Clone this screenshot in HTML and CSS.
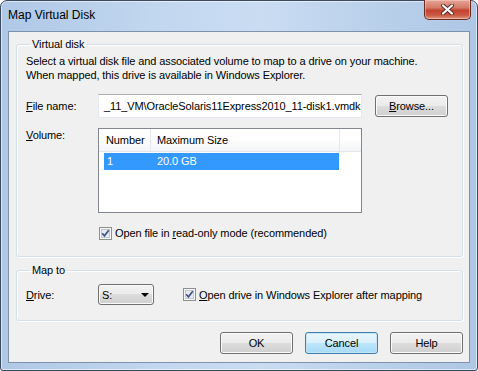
FILE: index.html
```html
<!DOCTYPE html>
<html lang="en">
<head>
    <meta charset="UTF-8">
    <title>Map Virtual Disk</title>
    <link rel="stylesheet" href="styles.css">
</head>
<body>
    <div class="window">
        <div class="titlebar">
            <span class="title">Map Virtual Disk</span>
            <button class="close-btn" aria-label="Close">
                <svg width="15" height="11" viewBox="0 0 15 11">
                    <path d="M3 1.5 L12 9.5 M12 1.5 L3 9.5" stroke="#5a2a22" stroke-width="4" stroke-linecap="round"/>
                    <path d="M3 1.5 L12 9.5 M12 1.5 L3 9.5" stroke="#fff" stroke-width="2.2" stroke-linecap="round"/>
                </svg>
            </button>
        </div>

        <div class="client">
            <!-- Virtual disk group -->
            <fieldset class="group group-disk">
                <legend>Virtual disk</legend>
                <p class="intro">Select a virtual disk file and associated volume to map to a drive on your machine.<br>When mapped, this drive is available in Windows Explorer.</p>

                <div class="row row-file">
                    <label class="field-label" for="file-name"><u>F</u>ile name:</label>
                    <div class="textbox" id="file-name">_11_VM\OracleSolaris11Express2010_11-disk1.vmdk</div>
                    <button class="btn browse-btn"><u>B</u>rowse...</button>
                </div>

                <div class="row row-volume">
                    <span class="field-label"><u>V</u>olume:</span>
                    <div class="listview">
                        <div class="list-header">
                            <span class="col col-num">Number</span>
                            <span class="col col-size">Maximum Size</span>
                            <span class="col col-rest"></span>
                        </div>
                        <div class="list-row selected">
                            <span class="cell cell-num">1</span>
                            <span class="cell cell-size">20.0 GB</span>
                        </div>
                    </div>
                </div>

                <div class="check check-readonly">
                    <span class="check-box">
                        <svg width="13" height="13" viewBox="0 0 13 13">
                            <rect x="0.5" y="0.5" width="12" height="12" fill="#f6f6f6" stroke="#8e8f8f"/>
                            <rect x="2.5" y="2.5" width="8" height="8" fill="#e6ebf2" stroke="#bfc7d2"/>
                            <path d="M3.2 6.3 L5.4 8.8 L9.8 3.2" fill="none" stroke="#3f5487" stroke-width="1.7"/>
                        </svg>
                    </span>
                    <span>Open file in <u>r</u>ead-only mode (recommended)</span>
                </div>
            </fieldset>

            <!-- Map to group -->
            <fieldset class="group group-map">
                <legend>Map to</legend>
                <div class="row row-drive">
                    <span class="field-label"><u>D</u>rive:</span>
                    <div class="combo">
                        <span>S:</span>
                        <span class="combo-arrow"></span>
                    </div>
                    <div class="check check-explorer">
                        <span class="check-box">
                            <svg width="13" height="13" viewBox="0 0 13 13">
                                <rect x="0.5" y="0.5" width="12" height="12" fill="#f6f6f6" stroke="#8e8f8f"/>
                                <rect x="2.5" y="2.5" width="8" height="8" fill="#e6ebf2" stroke="#bfc7d2"/>
                                <path d="M3.2 6.3 L5.4 8.8 L9.8 3.2" fill="none" stroke="#3f5487" stroke-width="1.7"/>
                            </svg>
                        </span>
                        <span><u>O</u>pen drive in Windows Explorer after mapping</span>
                    </div>
                </div>
            </fieldset>

            <div class="footer">
                <button class="btn">OK</button>
                <button class="btn btn-default">Cancel</button>
                <button class="btn">Help</button>
            </div>
        </div>
    </div>
</body>
</html>
```

FILE: styles.css
```css
* {
    box-sizing: border-box;
}
body {
    margin: 0;
    font-family: 'Liberation Sans', Arial, sans-serif;
    font-size: 11px;
    letter-spacing: -0.1px;
    color: #000;
    background: #fff;
}
.window {
    width: 478px;
    height: 371px;
    display: flex;
    flex-direction: column;
    border: 1px solid #3b4a5d;
    border-radius: 7px 7px 3px 3px;
    background: linear-gradient(to right, #afc8e6 0%, #c3d8f0 35%, #c9dcf2 55%, #b9d0ea 80%, #aec7e5 100%);
    box-shadow: inset 0 0 0 1px rgba(255, 255, 255, 0.55);
}
.titlebar {
    height: 30px;
    flex-shrink: 0;
    display: flex;
    justify-content: space-between;
    align-items: flex-start;
}
.title {
    font-size: 12px;
    letter-spacing: 0;
    line-height: 14px;
    padding: 7px 0 0 7px;
    color: #000;
}
.close-btn {
    width: 47px;
    height: 20px;
    margin: -1px 6px 0 0;
    padding: 0;
    border: 1px solid #6b2a20;
    border-top: none;
    border-radius: 0 0 5px 5px;
    background: linear-gradient(#e8a595 0%, #d47a69 40%, #c2432f 55%, #c95a45 80%, #e09a84 100%);
    box-shadow: inset 0 0 0 1px rgba(255, 220, 210, 0.45);
    display: flex;
    align-items: center;
    justify-content: center;
}
.client {
    flex: 1;
    margin: 0 7px 7px 7px;
    background: #f0f0f0;
    border: 1px solid #7f92ab;
    display: flex;
    flex-direction: column;
}
.group {
    margin: 0 6px 0 7px;
    padding: 0 9px;
    border: 1px solid #d5dfe5;
    border-radius: 3px;
    box-shadow: inset 1px 1px 0 #fff, 1px 1px 0 #fff;
    min-width: 0;
}
.group legend {
    margin-left: 4px;
    padding: 0 2px;
    line-height: 13px;
}
.group-disk {
    margin-top: 6px;
    padding-bottom: 16px;
}
.group-map {
    margin-top: 7px;
    padding-bottom: 15px;
}
.intro {
    margin: 3px 0 0 0;
    line-height: 14px;
}
.row {
    display: flex;
    align-items: center;
}
.field-label {
    width: 72px;
    flex-shrink: 0;
    line-height: 14px;
}
.row-file {
    margin-top: 12px;
}
.textbox {
    width: 264px;
    height: 24px;
    background: #fff;
    border: 1px solid #e3e9ef;
    border-top-color: #abadb3;
    padding-left: 5px;
    line-height: 22px;
    white-space: nowrap;
    overflow: hidden;
}
.btn {
    width: 73px;
    height: 22px;
    padding: 0;
    border: 1px solid #707070;
    border-radius: 3px;
    background: linear-gradient(#f2f2f2 0%, #ebebeb 50%, #dddddd 50%, #cfcfcf 100%);
    box-shadow: inset 0 0 0 1px #fbfbfb;
    font-family: inherit;
    font-size: 11px;
    letter-spacing: inherit;
    color: #000;
}
.browse-btn {
    margin-left: 13px;
}
.btn-default {
    border-color: #3c7fb1;
    background: linear-gradient(#eaf6fd 0%, #d9f0fc 50%, #bee6fd 50%, #a7d9f5 100%);
    box-shadow: inset 0 0 0 1px #c4e5f6;
}
.row-volume {
    margin-top: 10px;
    align-items: flex-start;
}
.listview {
    width: 264px;
    height: 85px;
    background: #fff;
    border: 1px solid #828790;
}
.list-header {
    display: grid;
    grid-template-columns: 52px 189px 1fr;
    height: 23px;
    background: linear-gradient(#ffffff 0%, #ffffff 45%, #f3f4f6 100%);
    border-bottom: 1px solid #e3e6ea;
}
.col {
    line-height: 22px;
    padding-left: 7px;
    border-right: 1px solid #e3e8ee;
}
.col-size {
    padding-left: 6px;
}
.col-rest {
    border-right: none;
}
.list-row {
    display: grid;
    grid-template-columns: 47px 188px;
    width: 235px;
    height: 17px;
    margin: 1px 0 0 5px;
    line-height: 17px;
}
.list-row.selected {
    background: #3399ff;
    color: #fff;
}
.cell-num {
    padding-left: 3px;
}
.cell-size {
    padding-left: 6px;
}
.check {
    display: flex;
    align-items: center;
    line-height: 14px;
}
.check-box {
    width: 13px;
    height: 13px;
    margin-right: 3px;
    display: flex;
}
.check-readonly {
    margin: 13px 0 0 73px;
}
.row-drive {
    margin-top: 7px;
}
.combo {
    width: 56px;
    height: 21px;
    border: 1px solid #707070;
    border-radius: 3px;
    background: linear-gradient(#f2f2f2 0%, #ebebeb 50%, #dddddd 50%, #cfcfcf 100%);
    box-shadow: inset 0 0 0 1px #fbfbfb;
    display: flex;
    align-items: center;
    justify-content: space-between;
    padding: 0 4px 0 3px;
}
.combo-arrow {
    width: 0;
    height: 0;
    border-left: 4px solid transparent;
    border-right: 4px solid transparent;
    border-top: 4px solid #000;
}
.check-explorer {
    margin-left: 29px;
}
.footer {
    margin: 11px 6px 0 0;
    display: flex;
    justify-content: flex-end;
    gap: 12px;
}
```
